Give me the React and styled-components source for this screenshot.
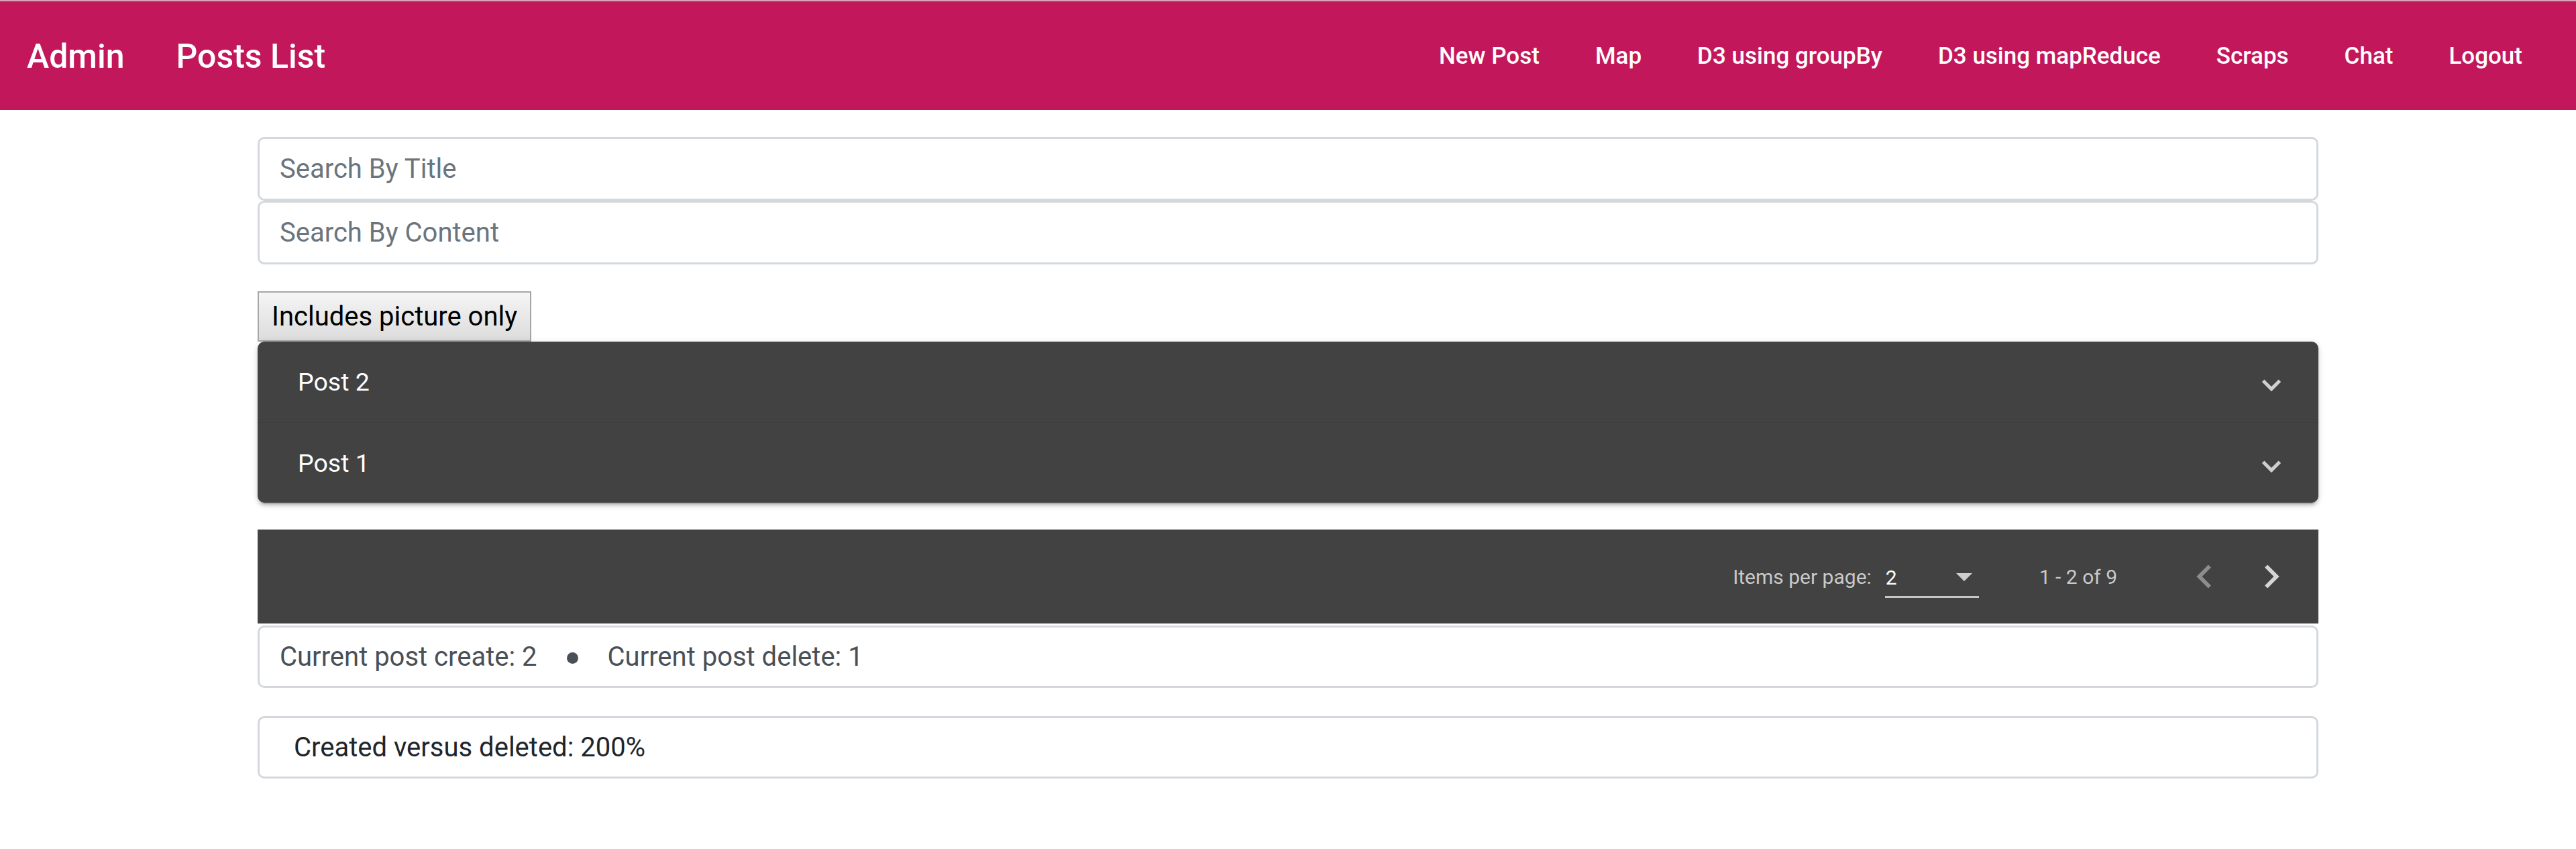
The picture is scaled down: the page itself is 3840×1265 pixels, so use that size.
import React from "react";
import styled, { createGlobalStyle } from "styled-components";

const GlobalStyle = createGlobalStyle`
  html, body {
    margin: 0;
    padding: 0;
    background: #fff;
    font-family: Roboto, "Helvetica Neue", Arial, sans-serif;
  }
  * { box-sizing: border-box; }
`;

const Toolbar = styled.header`
  display: flex;
  align-items: center;
  height: 164px;
  padding: 2px 40px 0;
  border-top: 2px solid #dca2b9;
  background: #c2185b;
  color: #fff;
`;

const Brand = styled.span`
  font-size: 50px;
  font-weight: 500;
  line-height: 1;
  margin-right: ${(p) => p.$gap || 0}px;
`;

const Spacer = styled.div`
  flex: 1;
`;

const NavButton = styled.a`
  padding: 0 41.5px;
  font-size: 35px;
  font-weight: 500;
  line-height: 90px;
  color: #fff;
  text-decoration: none;
  cursor: pointer;

  &:last-child {
    padding-right: 40px;
  }
`;

const Container = styled.main`
  width: 80%;
  margin: 40px auto 0;
  display: flex;
  flex-direction: column;
  align-items: flex-start;
`;

const SearchInput = styled.input`
  display: block;
  width: 100%;
  height: 95px;
  padding: 0 30px;
  border: 3px solid #d4d8dd;
  border-radius: 10px;
  font-family: Roboto, sans-serif;
  font-size: 40px;
  color: #495057;
  background: #fff;
  outline: none;

  &::placeholder {
    color: #6c757d;
  }
`;

const FilterButton = styled.button`
  margin-top: 40px;
  height: 75px;
  padding: 0 19px;
  border: 2px solid #a6a6a6;
  border-radius: 0;
  background: linear-gradient(#f5f5f5, #dcdcdc);
  font-family: Roboto, sans-serif;
  font-size: 40px;
  color: #000;
`;

const Accordion = styled.section`
  width: 100%;
  border-radius: 10px;
  background: #424242;
  box-shadow: 0 7px 2px -5px rgba(0, 0, 0, 0.2), 0 5px 5px 0 rgba(0, 0, 0, 0.14),
    0 2px 12px 0 rgba(0, 0, 0, 0.12);
`;

const PanelHeader = styled.div`
  display: flex;
  align-items: center;
  height: 120px;
  padding: 0 60px;
  color: #fff;
  font-size: 37.5px;
  & + & {
    border-top: 1px solid rgba(0, 0, 0, 0.06);
  }
`;

const PanelTitle = styled.span`
  flex: 1;
`;

const Indicator = styled.span`
  display: inline-block;
  width: 20px;
  height: 20px;
  border-style: solid;
  border-width: 0 5px 5px 0;
  border-color: rgba(255, 255, 255, 0.75);
  transform: rotate(45deg);
`;

const Paginator = styled.div`
  width: 100%;
  margin-top: 40px;
  height: 140px;
  padding: 0 20px;
  display: flex;
  align-items: center;
  justify-content: flex-end;
  background: #424242;
  color: rgba(255, 255, 255, 0.72);
  font-size: 30px;
`;

const PageSize = styled.div`
  display: flex;
  align-items: center;
  margin-right: 20px;
`;

const PageSizeLabel = styled.span`
  margin: 0 10px;
`;

const Select = styled.div`
  display: flex;
  align-items: center;
  justify-content: space-between;
  width: 140px;
  height: 49px;
  margin: 15px 10px 0;
  padding: 0 10px 10px 1px;
  border-bottom: 3px solid rgba(255, 255, 255, 0.7);
  color: #fff;
`;

const Arrow = styled.span`
  width: 0;
  height: 0;
  border-left: 12.5px solid transparent;
  border-right: 12.5px solid transparent;
  border-top: 12.5px solid rgba(255, 255, 255, 0.75);
`;

const RangeLabel = styled.span`
  margin: 0 80px 0 60px;
`;

const IconButton = styled.button`
  width: 100px;
  height: 100px;
  padding: 0;
  border: none;
  background: transparent;
  display: flex;
  align-items: center;
  justify-content: center;
  color: ${(p) => (p.disabled ? "rgba(255,255,255,0.4)" : "rgba(255,255,255,0.78)")};
`;

const StatBox = styled.div`
  width: 100%;
  height: 93px;
  margin-top: ${(p) => p.$top || 0}px;
  padding: 0 ${(p) => p.$pad || 30}px;
  display: flex;
  align-items: center;
  border: 3px solid #d4d8dd;
  border-radius: 10px;
  font-size: 40px;
  color: ${(p) => p.$color || "#495057"};
`;

const Dot = styled.span`
  width: 17px;
  height: 17px;
  margin: 4px 44px 0 44px;
  border-radius: 50%;
  background: #495057;
`;

const Chevron = ({ dir }) => (
  <svg width="70" height="70" viewBox="0 0 24 24" fill="currentColor">
    {dir === "left" ? (
      <path d="M15.41 7.41 14 6l-6 6 6 6 1.41-1.41L10.83 12z" />
    ) : (
      <path d="M10 6 8.59 7.41 13.17 12l-4.58 4.59L10 18l6-6z" />
    )}
  </svg>
);

const navItems = ["New Post", "Map", "D3 using groupBy", "D3 using mapReduce", "Scraps", "Chat", "Logout"];
const posts = ["Post 2", "Post 1"];

export default function App() {
  return (
    <>
      <GlobalStyle />
      <Toolbar>
        <Brand $gap={77}>Admin</Brand>
        <Brand>Posts List</Brand>
        <Spacer />
        {navItems.map((item) => (
          <NavButton key={item}>{item}</NavButton>
        ))}
      </Toolbar>
      <Container>
        <SearchInput placeholder="Search By Title" />
        <SearchInput placeholder="Search By Content" />
        <FilterButton>Includes picture only</FilterButton>
        <Accordion>
          {posts.map((p) => (
            <PanelHeader key={p}>
              <PanelTitle>{p}</PanelTitle>
              <Indicator />
            </PanelHeader>
          ))}
        </Accordion>
        <Paginator>
          <PageSize>
            <PageSizeLabel>Items per page:</PageSizeLabel>
            <Select>
              <span>2</span>
              <Arrow />
            </Select>
          </PageSize>
          <RangeLabel>1 - 2 of 9</RangeLabel>
          <IconButton disabled>
            <Chevron dir="left" />
          </IconButton>
          <IconButton>
            <Chevron dir="right" />
          </IconButton>
        </Paginator>
        <StatBox $top={3}>
          <span>Current post create: 2</span>
          <Dot />
          <span>Current post delete: 1</span>
        </StatBox>
        <StatBox $top={42} $pad={51} $color="#212529">
          Created versus deleted: 200%
        </StatBox>
      </Container>
    </>
  );
}
